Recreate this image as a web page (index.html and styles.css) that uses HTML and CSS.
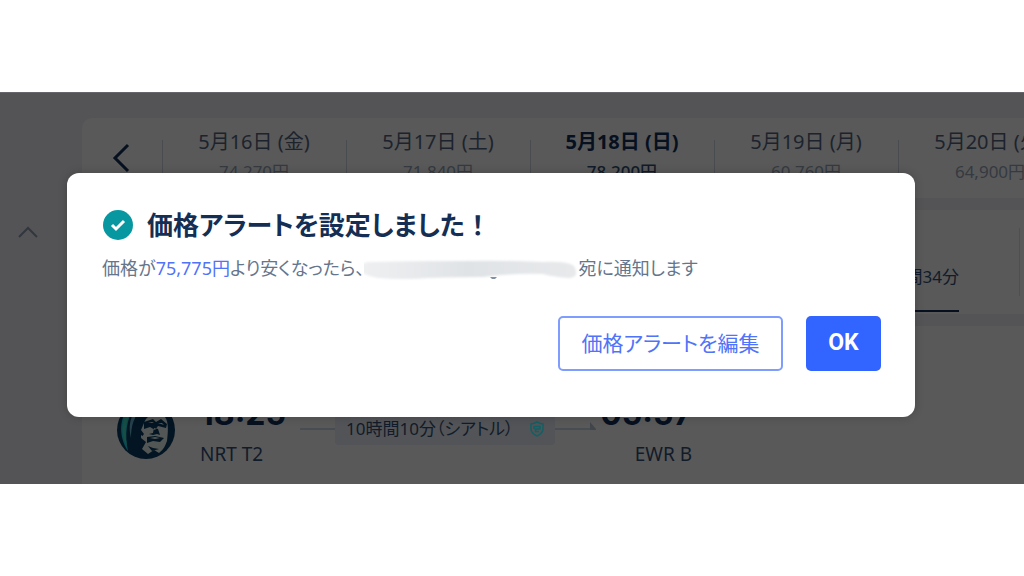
FILE: index.html
```html
<!DOCTYPE html>
<html lang="ja">
<head>
<meta charset="utf-8">
<title>価格アラート</title>
<link rel="stylesheet" href="styles.css">
</head>
<body>
<main class="stage">
  <aside class="side">
    <button class="icon-button" aria-label="閉じる"><svg width="20" height="12" viewBox="0 0 20 12"><path d="M1 11 10 2l9 9" fill="none" stroke="#32373f" stroke-width="2"/></svg></button>
  </aside>
  <div class="content">
    <section class="card dates">
      <button class="icon-button prev" aria-label="前の日付"><svg width="18" height="30" viewBox="0 0 18 30"><path d="M16 2 3 15l13 13" fill="none" stroke="#06101f" stroke-width="3"/></svg></button>
      <div class="date"><span>5月16日 (金)</span><small>74,270円</small></div>
      <div class="date"><span>5月17日 (土)</span><small>71,840円</small></div>
      <div class="date selected"><span>5月18日 (日)</span><small>78,200円</small></div>
      <div class="date"><span>5月19日 (月)</span><small>60,760円</small></div>
      <div class="date"><span>5月20日 (火)</span><small>64,900円</small></div>
    </section>
    <section class="card sort">
      <div class="sort-option">10時間34分</div>
      <div class="sort-next"></div>
    </section>
    <section class="card flight">
      <svg class="logo" width="58" height="58" viewBox="0 0 58 58">
        <circle cx="29" cy="29" r="29" fill="#031522"/>
        <path d="M14 4C2 15 1 35 11 50c-3-15-3-32 9-47z" fill="#0b4a50"/>
        <path d="M7 18C4 28 6 38 10 45 8 33 8 25 12 14z" fill="#174f44"/>
        <path d="M22 5c-9 9-11 20-8 32 0-12 3-23 12-30z" fill="#26414c"/>
        <path d="M27 22c3-9 14-13 21-6 4 5 3 16 2 24-2 5-3 8-8 12l-5-3-6 4-6-5 4-7-5-4 3-4-3-4z" fill="#525655"/>
        <path d="m27 21 9-3 3 3 5-3 6 5-1 4-8-2-3 4-5-3-6 2zM30 36l8-1 9 2-4 4-7-1-6 2zM31 45l5 2 6 1-7 2zM37 27l-1 5-4 1 4 1 4-1 3 1-2-6z" fill="#031522"/>
        <path d="m31 22 4-1 2 1zM41 22l4 0 2 2zM33 37l5-1 5 1-5 1zM24 34l3 2-3 1z" fill="#525655"/>
      </svg>
      <div class="airport"><strong>18:25</strong><span>NRT T2</span></div>
      <div class="route">
        <i class="line"></i>
        <span class="duration"><span>10時間10分（シアトル）</span><svg width="16" height="16" viewBox="0 0 16 16" fill="none" stroke="#126064" stroke-width="1.5"><path d="M8 1c2 1 4 2 6 2v5c0 3-2 5-6 7-4-2-6-4-6-7V3c2 0 4-1 6-2z"/><path d="M5 8V5.500h6V8H6.500v2.500H10"/></svg></span>
        <i class="line"></i><svg class="tip" width="6" height="8" viewBox="0 0 6 8"><path d="M0 0 6 7v1H0z" fill="#41464d"/></svg>
      </div>
      <div class="airport arrival"><strong>05:57</strong><span>EWR B</span></div>
    </section>
  </div>
  <div class="dialog" role="dialog" aria-labelledby="alert-title">
    <h1 id="alert-title"><svg width="30" height="30" viewBox="0 0 30 30"><circle cx="15" cy="15" r="15" fill="#0797a1"/><path d="m9 15 4 4 8-8" fill="none" stroke="#fff" stroke-width="3"/></svg><span>価格アラートを設定しました<span class="full-width">！</span></span></h1>
    <p class="message"><span>価格が<b>75,775円</b>より安くなったら、</span><svg class="redacted" width="214" height="24" viewBox="5 0 214 24"><defs><linearGradient id="smudge"><stop offset="0" stop-color="#eff0f2"/><stop offset=".5" stop-color="#e0e3e6"/><stop offset="1" stop-color="#e7e9eb"/></linearGradient><filter id="soft"><feGaussianBlur stdDeviation="1"/></filter></defs><path d="M9 5Q55 4 100 4q45-1 84 1 24-1 31 4 6 11-4 12-16-1-27-4-28-1-60 3-22 0-55 1-24 2-50 0-16-3-20-9Q2 6 9 5z" fill="url(#smudge)" filter="url(#soft)"/><path d="M131 20h7l-2 2h-3z" fill="#8290a3"/></svg><span>宛に通知します</span></p>
    <div class="actions"><button class="edit">価格アラートを編集</button><button class="ok">OK</button></div>
  </div>
</main>
</body>
</html>
```
FILE: styles.css
```css
* { box-sizing: border-box; }
body {
  margin: 0;
  min-height: 100vh;
  display: flex;
  flex-direction: column;
  justify-content: center;
  background: #fff;
  color: #111b29;
  font-family: "Noto Sans", "Noto Sans CJK JP", sans-serif;
  font-size: 18px;
}
button { font: inherit; cursor: pointer; }
svg { display: block; flex: none; }
.stage {
  position: relative;
  display: grid;
  grid-template-columns: 82px 1fr;
  overflow: hidden;
  background: #545456;
  border-top: 1px solid #66676a;
}
.side { padding: 126px 0 0 18px; }
.icon-button { padding: 0; border: 0; background: none; }
.content {
  display: flex;
  flex-direction: column;
  gap: 12px;
  min-width: 0;
  padding-top: 25px;
}
.card { background: #595959; }
.dates {
  display: grid;
  grid-template-columns: 80px repeat(5, 184px);
  height: 80px;
  border-radius: 10px 0 0 0;
  overflow: hidden;
}
.prev { padding-left: 30px; }
.date {
  display: flex;
  flex-direction: column;
  align-items: center;
  padding-top: 10px;
  background: linear-gradient(#484b50, #484b50) 0 22px / 1px 46px no-repeat;
  color: #1d232c;
  font-size: 20px;
  line-height: 28px;
  white-space: nowrap;
}
.date small { color: #353941; font-size: 17px; line-height: 32px; }
.selected { color: #06101f; font-weight: 700; }
.selected small { color: #111b29; font-weight: 500; }
.sort {
  display: flex;
  justify-content: flex-end;
  height: 104px;
  padding: 0 4px 2px 0;
}
.sort-option {
  width: 180px;
  padding-top: 52px;
  border-bottom: 2px solid #06101f;
  font-size: 17px;
  line-height: 30px;
  text-align: right;
}
.sort-next { width: 61px; background: linear-gradient(#4d4f52, #4d4f52) 100% 18px / 1px 68px no-repeat; }
.flight {
  display: flex;
  align-items: flex-start;
  height: 158px;
  padding: 69px 332px 0 35px;
}
.logo { margin-top: 6px; }
.airport { display: flex; flex-direction: column; width: 100px; margin-left: 25px; white-space: nowrap; }
.airport strong { color: #06101f; font-family: Inter, "Noto Sans", sans-serif; font-size: 32px; line-height: 38px; }
.airport span { font-size: 19px; line-height: 42px; }
.arrival { width: 92px; margin-left: 4px; align-items: flex-end; }
.route { flex: 1; display: flex; align-items: center; padding-top: 18px; }
.line { flex: 1; height: 2px; background: #484d54; }
.tip { align-self: center; margin-bottom: 6px; }
.duration {
  display: flex;
  align-items: center;
  gap: 16px;
  width: 220px;
  height: 32px;
  padding-left: 11px;
  border-radius: 4px;
  background: #535457;
  font-size: 17px;
  line-height: 28px;
  font-feature-settings: "palt";
  white-space: nowrap;
}
.dialog {
  position: absolute;
  top: 80px;
  left: 67px;
  right: 109px;
  padding: 34px 34px 46px 35px;
  border-radius: 12px;
  background: #fff;
  box-shadow: 0 0 10px #0003;
  font-feature-settings: "palt";
}
.dialog h1 {
  display: flex;
  align-items: center;
  gap: 14px;
  margin: 0;
  padding-left: 1px;
  color: #152e53;
  font-size: 26px;
  line-height: 36px;
}
.full-width { font-feature-settings: normal; }
.message {
  display: flex;
  align-items: center;
  margin: 10px 0 32px;
  color: #65758c;
  font-size: 18px;
  line-height: 31px;
  white-space: nowrap;
}
.message b { color: #4f73f9; font-weight: 400; }
.actions { display: flex; justify-content: flex-end; gap: 23px; }
.actions button { height: 55px; border-radius: 5px; }
.edit {
  width: 225px;
  padding: 0 0 4px;
  border: 2px solid #7f9dff;
  background: #fff;
  color: #4f73f9;
  font-size: 21px;
  font-feature-settings: "palt";
}
.ok { width: 75px; padding: 0 0 2px; border: 0; background: #3264ff; color: #fff; font-family: Roboto, sans-serif; font-size: 23px; font-weight: 700; }
```
